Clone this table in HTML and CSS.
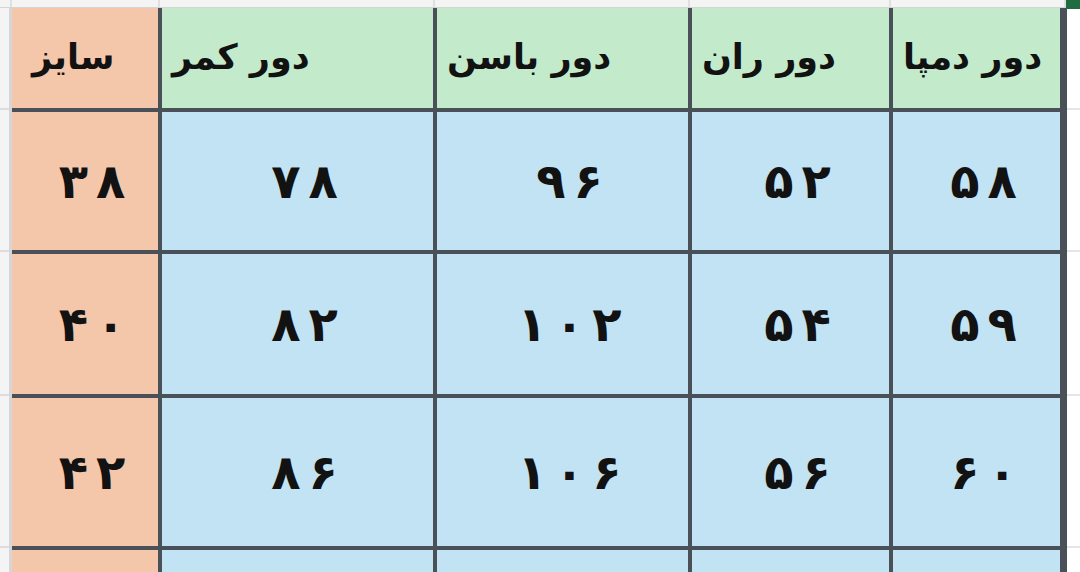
FILE: index.html
```html
<!DOCTYPE html>
<html lang="fa">
<head>
<meta charset="utf-8">
<title>جدول سایز</title>
<link rel="stylesheet" href="styles.css">
</head>
<body>
<div class="sheet">
  <div class="colbar">
    <div class="colbar-cell"></div>
    <div class="colbar-cell"></div>
    <div class="colbar-cell"></div>
    <div class="colbar-cell"></div>
    <div class="colbar-cell"></div>
    <div class="colbar-cell"></div>
    <div class="colbar-cell last"></div>
  </div>
  <div class="main">
    <div class="gutter gutter-left">
      <div class="g-cell g-head"></div>
      <div class="g-cell g-r1"></div>
      <div class="g-cell g-r2"></div>
      <div class="g-cell g-r3"></div>
      <div class="g-cell g-r4"></div>
    </div>
    <div class="grid">
      <div class="cell head size"><span class="h-size">سایز</span></div>
      <div class="cell head"><span>دور کمر</span></div>
      <div class="cell head"><span>دور باسن</span></div>
      <div class="cell head"><span>دور ران</span></div>
      <div class="cell head"><span>دور دمپا</span></div>

      <div class="cell num size"><span class="digits"><span>۳</span><span>۸</span></span></div>
      <div class="cell num"><span class="digits"><span>۷</span><span>۸</span></span></div>
      <div class="cell num"><span class="digits"><span>۹</span><span>۶</span></span></div>
      <div class="cell num"><span class="digits"><span>۵</span><span>۲</span></span></div>
      <div class="cell num"><span class="digits"><span>۵</span><span>۸</span></span></div>

      <div class="cell num size"><span class="digits"><span>۴</span><span>۰</span></span></div>
      <div class="cell num"><span class="digits"><span>۸</span><span>۲</span></span></div>
      <div class="cell num"><span class="digits"><span>۱</span><span>۰</span><span>۲</span></span></div>
      <div class="cell num"><span class="digits"><span>۵</span><span>۴</span></span></div>
      <div class="cell num"><span class="digits"><span>۵</span><span>۹</span></span></div>

      <div class="cell num size"><span class="digits"><span>۴</span><span>۲</span></span></div>
      <div class="cell num"><span class="digits"><span>۸</span><span>۶</span></span></div>
      <div class="cell num"><span class="digits"><span>۱</span><span>۰</span><span>۶</span></span></div>
      <div class="cell num"><span class="digits"><span>۵</span><span>۶</span></span></div>
      <div class="cell num"><span class="digits"><span>۶</span><span>۰</span></span></div>

      <div class="cell size"></div>
      <div class="cell"></div>
      <div class="cell"></div>
      <div class="cell"></div>
      <div class="cell"></div>
    </div>
    <div class="gutter gutter-right">
      <div class="g-cell g-head"></div>
      <div class="g-cell g-r1"></div>
      <div class="g-cell g-r2"></div>
      <div class="g-cell g-r3"></div>
      <div class="g-cell g-r4"></div>
    </div>
  </div>
  <div class="select-mark"></div>
</div>
</body>
</html>
```

FILE: styles.css
```css
html, body {
  margin: 0;
  padding: 0;
  background: #ffffff;
  width: 1080px;
  height: 572px;
  overflow: hidden;
}

.sheet {
  position: relative;
  width: 1080px;
  height: 572px;
  font-family: "DejaVu Sans", sans-serif;
  color: #121212;
}

.colbar {
  display: grid;
  grid-template-columns: 12px 148px 275px 255px 201px 175px 1fr;
  height: 8px;
  box-sizing: border-box;
  background: #f4f4f4;
  border-bottom: 1px solid #d4d4d4;
}

.colbar-cell {
  border-right: 2px solid #e0e0e0;
}

.colbar-cell.last {
  border-right: none;
  background: #fafafa;
}

.main {
  display: flex;
  height: 564px;
}

.gutter {
  display: flex;
  flex-direction: column;
}

.gutter-left {
  width: 12px;
  box-sizing: border-box;
  background: #f4f4f4;
  border-right: 3px solid #d6d6d6;
}

.gutter-right {
  flex: 1;
  background: #ffffff;
}

.g-cell {
  box-sizing: border-box;
  border-bottom: 2px solid #dcdcdc;
}

.gutter-right .g-cell {
  border-bottom-color: #e6e6e6;
}

.g-head { height: 102px; }
.g-r1 { height: 142px; }
.g-r2 { height: 144px; }
.g-r3 { height: 152px; }
.g-r4 { flex: 1; border-bottom: none; }

.grid {
  display: grid;
  grid-template-columns: 146px 271px 251px 197px 167px;
  grid-template-rows: 100px 138px 140px 148px 40px;
  gap: 4px;
  background: #4a5057;
  border-right: 7px solid #4a5057;
  align-self: flex-start;
}

.cell {
  background: #c2e3f3;
  display: flex;
  align-items: center;
  direction: rtl;
}

.cell.head {
  background: #c3ebcb;
  justify-content: flex-end;
  padding-left: 10px;
  padding-bottom: 2px;
  font-size: 35px;
  font-weight: bold;
}

.cell.size {
  background: #f5c7aa;
}

.h-size {
  margin-left: 10px;
}

.cell.num {
  justify-content: center;
  padding-left: 14px;
  font-size: 48px;
  font-weight: bold;
}

.digits {
  display: flex;
  direction: ltr;
  gap: 8px;
}

.select-mark {
  position: absolute;
  top: 0;
  right: 0;
  width: 14px;
  height: 9px;
  background: #1f6b42;
}
```
